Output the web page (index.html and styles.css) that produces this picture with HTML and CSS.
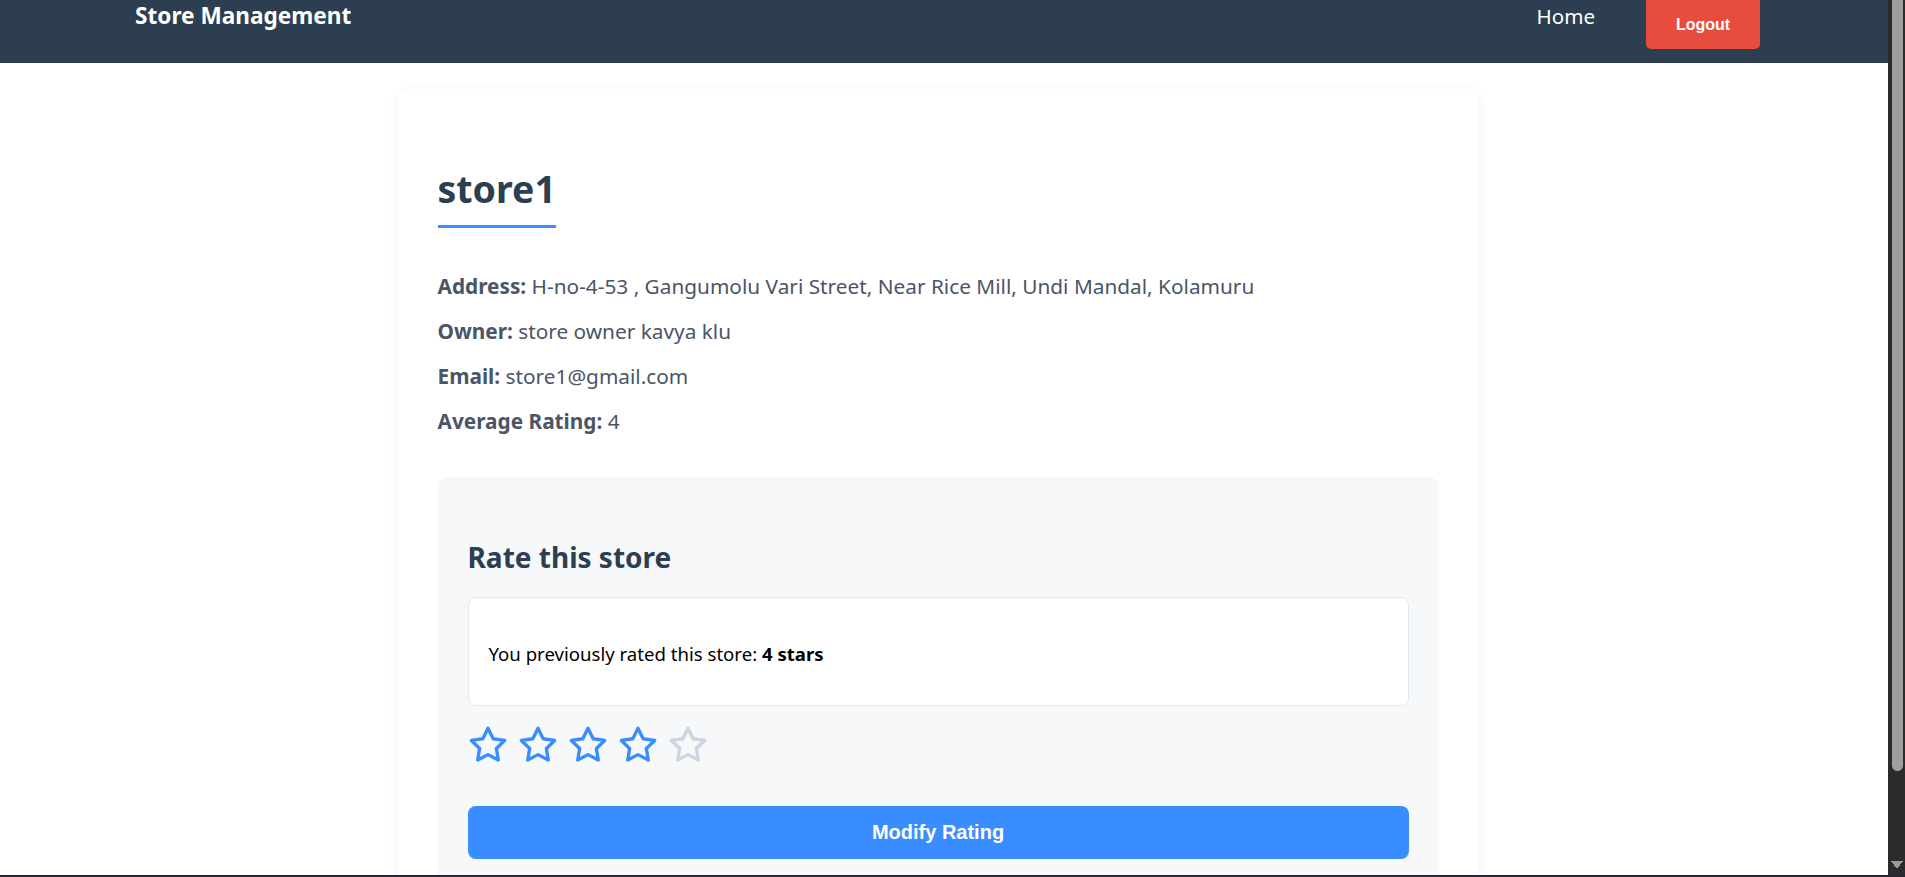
FILE: index.html
```html
<!DOCTYPE html>
<html lang="en">
<head>
<meta charset="utf-8">
<title>Store Management</title>
<link rel="stylesheet" href="styles.css">
</head>
<body>
<header class="topbar">
  <div class="brand">Store Management</div>
  <nav class="nav">
    <a class="nav-link" href="#">Home</a>
    <button class="logout" type="button">Logout</button>
  </nav>
</header>
<main class="page">
  <section class="card">
    <div class="title-wrap"><h2 class="title">store1</h2></div>
    <div class="details">
      <p><strong>Address:</strong> H-no-4-53 , Gangumolu Vari Street, Near Rice Mill, Undi Mandal, Kolamuru</p>
      <p><strong>Owner:</strong> store owner kavya klu</p>
      <p><strong>Email:</strong> store1@gmail.com</p>
      <p><strong>Average Rating:</strong> 4</p>
    </div>
    <div class="rate-box">
      <h3 class="rate-title">Rate this store</h3>
      <div class="prev-box">
        <p>You previously rated this store: <strong>4 stars</strong></p>
      </div>
      <div class="stars">
        <svg class="star on" viewBox="0 0 24 24" width="40" height="40"><polygon points="12 2 15.09 8.26 22 9.27 17 14.14 18.18 21.02 12 17.77 5.82 21.02 7 14.14 2 9.27 8.91 8.26 12 2"/></svg>
        <svg class="star on" viewBox="0 0 24 24" width="40" height="40"><polygon points="12 2 15.09 8.26 22 9.27 17 14.14 18.18 21.02 12 17.77 5.82 21.02 7 14.14 2 9.27 8.91 8.26 12 2"/></svg>
        <svg class="star on" viewBox="0 0 24 24" width="40" height="40"><polygon points="12 2 15.09 8.26 22 9.27 17 14.14 18.18 21.02 12 17.77 5.82 21.02 7 14.14 2 9.27 8.91 8.26 12 2"/></svg>
        <svg class="star on" viewBox="0 0 24 24" width="40" height="40"><polygon points="12 2 15.09 8.26 22 9.27 17 14.14 18.18 21.02 12 17.77 5.82 21.02 7 14.14 2 9.27 8.91 8.26 12 2"/></svg>
        <svg class="star off" viewBox="0 0 24 24" width="40" height="40"><polygon points="12 2 15.09 8.26 22 9.27 17 14.14 18.18 21.02 12 17.77 5.82 21.02 7 14.14 2 9.27 8.91 8.26 12 2"/></svg>
      </div>
      <button class="submit" type="button">Modify Rating</button>
    </div>
  </section>
</main>
<div class="scrollbar">
  <div class="scroll-thumb"></div>
  <div class="scroll-arrow"></div>
</div>
<div class="frame-edge"></div>
</body>
</html>
```

FILE: styles.css
```css
html, body {
  margin: 0;
  padding: 0;
  background: #ffffff;
}

body {
  font-family: "Noto Sans", "Open Sans", sans-serif;
  color: #4a5568;
  padding-right: 17px;
}

.topbar {
  background: #2c3e50;
  height: 63px;
  display: flex;
  justify-content: space-between;
  align-items: flex-start;
  padding: 0 128px 0 135px;
}

.brand {
  color: #ffffff;
  font-size: 22.6px;
  font-weight: 700;
  line-height: 32px;
}

.nav {
  display: flex;
  align-items: flex-start;
  gap: 51px;
}

.nav-link {
  color: #ffffff;
  text-decoration: none;
  font-size: 20.6px;
  line-height: 32px;
}

.logout {
  width: 114px;
  height: 49px;
  border: none;
  border-radius: 0 0 5px 5px;
  background: #e74c3c;
  color: #ffffff;
  font-family: "Liberation Sans", Arial, sans-serif;
  font-size: 16px;
  font-weight: 700;
  padding: 0;
}

.page {
  display: flex;
  justify-content: center;
  padding: 26px 12px 49px 0;
}

.card {
  width: 1081px;
  box-sizing: border-box;
  padding: 40px;
  background: #ffffff;
  border-radius: 10px;
  box-shadow: 0 2px 12px rgba(0, 0, 0, 0.06);
}

.title-wrap {
  margin: 35px 0 44px;
}

.title {
  display: inline-block;
  margin: 0;
  padding-bottom: 12px;
  border-bottom: 3px solid #3a8dff;
  font-size: 37.5px;
  font-weight: 700;
  color: #2c3e50;
  line-height: 49px;
}

.details p {
  margin: 16px 0;
  font-size: 20.8px;
  line-height: 29px;
  color: #4a5568;
}

.details strong {
  font-weight: 700;
}

.rate-box {
  margin-top: 41px;
  background: #f7f8fa;
  border-radius: 10px;
  padding: 30px;
}

.rate-title {
  margin: 31px 0 21px;
  font-size: 28px;
  font-weight: 700;
  line-height: 38px;
  color: #2c3e50;
}

.prev-box {
  height: 109px;
  box-sizing: border-box;
  display: flex;
  align-items: center;
  padding: 0 20px;
  background: #ffffff;
  border: 1px solid #e2e8f0;
  border-radius: 8px;
}

.prev-box p {
  margin: 4px 0 0;
  font-size: 18.6px;
  color: #000000;
}

.stars {
  display: flex;
  gap: 10px;
  margin-top: 19px;
  height: 40px;
}

.star {
  display: block;
  fill: none;
  stroke-width: 2;
  stroke-linecap: round;
  stroke-linejoin: round;
}

.star.on {
  stroke: #3a8dff;
}

.star.off {
  stroke: #cbd5e1;
}

.submit {
  display: block;
  width: 100%;
  height: 53px;
  margin-top: 41px;
  border: none;
  border-radius: 8px;
  background: #3a8dff;
  color: #ffffff;
  font-family: "Liberation Sans", Arial, sans-serif;
  font-size: 20px;
  font-weight: 700;
}

.scrollbar {
  position: fixed;
  top: 0;
  right: 0;
  bottom: 0;
  width: 17px;
  background: #2b2b2b;
  display: flex;
  flex-direction: column;
  justify-content: space-between;
}

.scroll-thumb {
  height: 771px;
  margin: 0 2px 0 4px;
  background: #9f9f9f;
  border-radius: 0 0 6px 6px;
}

.scroll-arrow {
  height: 17px;
  background:
    linear-gradient(to top right, transparent 50%, #9a9a9a 50%) 3px 1px / 6px 8px no-repeat,
    linear-gradient(to top left, transparent 50%, #9a9a9a 50%) 9px 1px / 6px 8px no-repeat;
}

.frame-edge {
  position: fixed;
  left: 0;
  right: 0;
  bottom: 0;
  height: 2px;
  background: #2a2433;
  z-index: 2;
}
```
